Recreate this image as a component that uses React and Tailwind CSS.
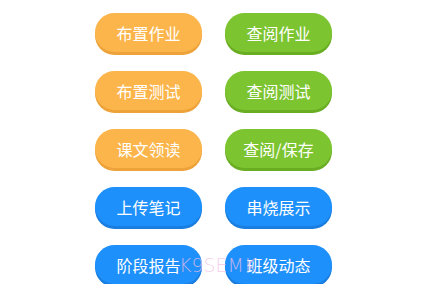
const rows = [
  [
    { label: '布置作业', face: 'bg-[#fcb54b]', edge: 'shadow-[0_3px_0_#eda23a]' },
    { label: '查阅作业', face: 'bg-[#7dc431]', edge: 'shadow-[0_3px_0_#69ad23]' },
  ],
  [
    { label: '布置测试', face: 'bg-[#fcb54b]', edge: 'shadow-[0_3px_0_#eda23a]' },
    { label: '查阅测试', face: 'bg-[#7dc431]', edge: 'shadow-[0_3px_0_#69ad23]' },
  ],
  [
    { label: '课文领读', face: 'bg-[#fcb54b]', edge: 'shadow-[0_3px_0_#eda23a]' },
    { label: '查阅/保存', face: 'bg-[#7dc431]', edge: 'shadow-[0_3px_0_#69ad23]' },
  ],
  [
    { label: '上传笔记', face: 'bg-[#1e90fb]', edge: 'shadow-[0_3px_0_#197ee0]' },
    { label: '串烧展示', face: 'bg-[#1e90fb]', edge: 'shadow-[0_3px_0_#197ee0]' },
  ],
  [
    { label: '阶段报告', face: 'bg-[#1e90fb]', edge: 'shadow-[0_3px_0_#197ee0]' },
    { label: '班级动态', face: 'bg-[#1e90fb]', edge: 'shadow-[0_3px_0_#197ee0]' },
  ],
];

export default function App() {
  return (
    <div className="relative h-[284px] w-[444px] overflow-hidden bg-white font-['Noto_Sans_CJK_SC',sans-serif]">
      <div className="grid grid-cols-[107px_107px] gap-x-[23px] gap-y-[19px] pl-[95px] pt-[13px]">
        {rows.flat().map((b) => (
          <button
            key={b.label}
            className={`flex h-[39px] items-center justify-center rounded-full text-[16px] text-white ${b.face} ${b.edge}`}
          >
            {b.label}
          </button>
        ))}
      </div>

      {/* watermark */}
      <div className="pointer-events-none absolute left-[179px] top-[251px] text-[19px] font-light text-[#f4bfe4]/75 font-['DejaVu_Sans',sans-serif]">
        K9SEMK
      </div>
    </div>
  );
}
